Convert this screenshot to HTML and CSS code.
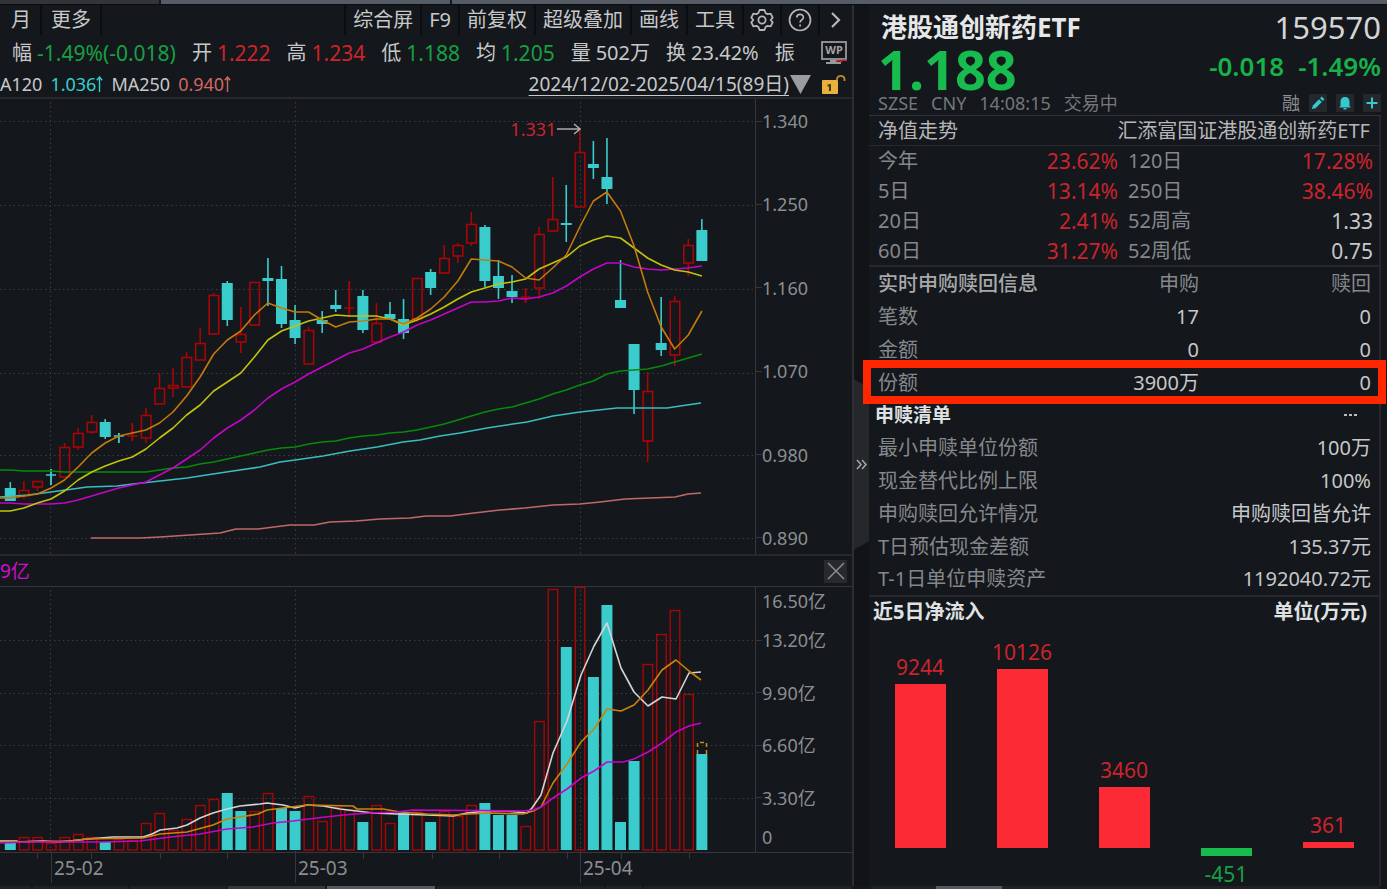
FILE: index.html
```html
<!DOCTYPE html>
<html lang="zh-CN">
<head>
<meta charset="utf-8">
<title>港股通创新药ETF 159570</title>
<link rel="stylesheet" href="styles.css">
</head>
<body>
<div class="strip strip-top"><span class="seg-dim"></span><span class="seg-lit"></span><span class="seg-lit seg-rest"></span></div>

<div class="workspace">
<main class="chart-pane">
  <nav class="toolbar">
    <div class="tool-group">
      <button class="tool">月</button>
      <button class="tool">更多</button>
    </div>
    <div class="tool-group tool-group-right">
      <button class="tool">综合屏</button>
      <button class="tool">F9</button>
      <button class="tool">前复权</button>
      <button class="tool">超级叠加</button>
      <button class="tool">画线</button>
      <button class="tool">工具</button>
      <button class="tool tool-icon" aria-label="设置">
        <svg width="24" height="24" viewBox="0 0 24 24" fill="none" stroke="#b4b6b8" stroke-width="1.8" stroke-linejoin="round"><path d="M9.6 2h4.8l1.2 3 1.9 1.1 3.2-.5 2 4.1-2 2.3 2 2.3-2 4.1-3.2-.5-1.9 1.1-1.2 3H9.600l-1.200-3-1.900-1.100-3.200.500-2-4.100 2-2.300-2-2.300 2-4.100 3.200.500L8.400 5z"/><circle cx="12" cy="12" r="3.600"/></svg>
      </button>
      <button class="tool tool-icon" aria-label="帮助">
        <svg width="24" height="24" viewBox="0 0 24 24" fill="none" stroke="#b4b6b8" stroke-width="1.700"><circle cx="12" cy="12" r="10.500"/><path d="M8.800 9.600c0-4.300 6.600-4.200 6.600-.300 0 2.600-3.300 2.500-3.300 5.200"/><path d="M12.100 16.400v2"/></svg>
      </button>
      <button class="tool tool-icon" aria-label="展开">
        <svg width="12" height="18" viewBox="0 0 12 18" fill="none" stroke="#b4b6b8" stroke-width="2.200"><path d="M2 2l7 7-7 7"/></svg>
      </button>
    </div>
  </nav>

  <div class="quote-row">
    <dl class="quotes">
      <div class="quote"><dt>幅</dt><dd class="down">-1.49%(-0.018)</dd></div>
      <div class="quote"><dt>开</dt><dd class="up">1.222</dd></div>
      <div class="quote"><dt>高</dt><dd class="up">1.234</dd></div>
      <div class="quote"><dt>低</dt><dd class="down">1.188</dd></div>
      <div class="quote"><dt>均</dt><dd class="down">1.205</dd></div>
      <div class="quote"><dt>量</dt><dd class="mixed">502万</dd></div>
      <div class="quote"><dt>换</dt><dd class="mixed">23.42%</dd></div>
      <div class="quote"><dt>振</dt></div>
    </dl>
    <button class="plain" aria-label="WP">
      <svg width="28" height="24" viewBox="0 0 28 24"><rect x="2" y="1" width="24" height="17" fill="none" stroke="#98999c" stroke-width="1.800"/><path d="M10 19h7v2h4v2H6v-2h4z" fill="#98999c"/><text class="wp-text" x="14" y="13" text-anchor="middle">WP</text><path d="M16 20.500l3-1 2 1 2-1.500 4 .500" stroke="#c8262d" stroke-width="1.500" fill="none"/></svg>
    </button>
  </div>

  <div class="ma-row">
    <span>A120</span>
    <span class="ma-cyan">1.036<svg width="7" height="16" viewBox="0 0 7 16" fill="none" stroke="currentColor" stroke-width="1.400"><path d="M3.500 16V1M.8 4.300L3.500 1l2.700 3.300"/></svg></span>
    <span>MA250</span>
    <span class="ma-salmon">0.940<svg width="7" height="16" viewBox="0 0 7 16" fill="none" stroke="currentColor" stroke-width="1.400"><path d="M3.500 16V1M.8 4.300L3.500 1l2.700 3.300"/></svg></span>
    <button class="range">2024/12/02-2025/04/15(89日)</button>
    <svg width="21" height="19" viewBox="0 0 21 19"><path d="M0 0h21L10.500 19z" fill="#9b9c9e"/></svg>
    <button class="plain lock" aria-label="锁定">
      <svg width="26" height="22" viewBox="0 0 26 22"><rect x="1" y="7" width="16" height="14" rx="1" fill="#e8b03c"/><path d="M16 7V5.500a4 4 0 0 1 7.500 0V8" fill="none" stroke="#c48a1e" stroke-width="1.800"/><path d="M9 11v7M6.500 12.500H9" stroke="#4b3a12" stroke-width="2" fill="none"/></svg>
    </button>
  </div>

  <section class="plot-row price-row">
    <div class="plot">
      <svg id="price" class="plot-svg" viewBox="0 99 755 455" preserveAspectRatio="none"></svg>
      <div class="peak">1.331<svg width="25" height="12" viewBox="0 0 25 12" fill="none" stroke="#a9abad" stroke-width="1.500"><path d="M1 6h23M18 1l6 5-6 5"/></svg></div>
    </div>
    <div class="axis price-axis">
      <span class="tick">1.340</span><span class="tick">1.250</span><span class="tick">1.160</span><span class="tick">1.070</span><span class="tick">0.980</span><span class="tick">0.890</span>
    </div>
  </section>

  <div class="sub-head">
    <span>9亿</span>
    <button class="close" aria-label="关闭"><svg width="18" height="18" viewBox="0 0 18 18" stroke="#8b8d90" stroke-width="1.500"><path d="M1 1l16 16M17 1L1 17"/></svg></button>
  </div>

  <section class="plot-row volume-row">
    <div class="plot"><svg id="volume" class="plot-svg" viewBox="0 587 755 265" preserveAspectRatio="none"></svg></div>
    <div class="axis volume-axis">
      <span>16.50亿</span>
      <div class="axis-mid"><span class="tick">13.20亿</span><span class="tick">9.90亿</span><span class="tick">6.60亿</span><span class="tick">3.30亿</span></div>
      <span>0</span>
    </div>
  </section>

  <div class="dates">
    <svg id="date-ticks" class="date-ticks" viewBox="0 0 852 7" preserveAspectRatio="none"></svg>
    <span></span><span class="date">25-02</span><span class="date">25-03</span><span class="date">25-04</span>
  </div>
</main>

<div class="gutter"><button class="collapse" aria-label="收起"><svg width="11" height="11" viewBox="0 0 11 11" fill="none" stroke="#a6a8aa" stroke-width="1.500"><path d="M1 1l4 4.500L1 10M6 1l4 4.500L6 10"/></svg></button></div>

<aside class="info">
  <header class="head">
    <div class="line"><h1 class="name">港股通创新药ETF</h1><span class="code">159570</span></div>
    <div class="line"><strong class="last">1.188</strong><div class="change"><span>-0.018</span><span>-1.49%</span></div></div>
    <div class="line meta">
      <div class="meta-left"><span>SZSE</span><span>CNY</span><span>14:08:15</span><span>交易中</span></div>
      <div class="meta-right"><span>融</span>
        <button class="chip" aria-label="编辑"><svg width="14" height="14" viewBox="0 0 14 14" fill="#35c8cd"><path d="M1 13l.8-3.600L8 3.200 10.800 6l-6.200 6.200zM9 2.200L10.800.6l2.600 2.600L11.800 5z"/></svg></button>
        <button class="chip" aria-label="提醒"><svg width="14" height="14" viewBox="0 0 14 14" fill="#35c8cd"><path d="M7 1c3 0 4.500 2 4.500 4.500V10L13 11.500H1L2.500 10V5.500C2.500 3 4 1 7 1zM5.500 12h3v1.500h-3z"/></svg></button>
        <button class="chip" aria-label="添加"><svg width="14" height="14" viewBox="0 0 14 14" stroke="#35c8cd" stroke-width="2"><path d="M7 1.500v11M1.500 7h11"/></svg></button>
      </div>
    </div>
  </header>

  <div class="body">
    <div class="trend-head"><span>净值走势</span><span>汇添富国证港股通创新药ETF</span></div>
    <table class="trend">
      <tr><th scope="row">今年</th><td class="up">23.62%</td><th scope="row">120日</th><td class="up">17.28%</td></tr>
      <tr><th scope="row">5日</th><td class="up">13.14%</td><th scope="row">250日</th><td class="up">38.46%</td></tr>
      <tr><th scope="row">20日</th><td class="up">2.41%</td><th scope="row">52周高</th><td>1.33</td></tr>
      <tr><th scope="row">60日</th><td class="up">31.27%</td><th scope="row">52周低</th><td>0.75</td></tr>
    </table>
    <table class="flows">
      <tr><th scope="col" class="flows-title">实时申购赎回信息</th><th scope="col">申购</th><th scope="col">赎回</th></tr>
      <tr><th scope="row">笔数</th><td>17</td><td>0</td></tr>
      <tr><th scope="row">金额</th><td>0</td><td>0</td></tr>
      <tr class="marked"><th scope="row">份额</th><td>3900万</td><td>0</td></tr>
    </table>
    <div class="list-head"><h2>申赎清单</h2><button class="plain more" aria-label="更多"><svg width="13" height="3" viewBox="0 0 13 3" fill="#b9bbbd"><path d="M0 0h3v2H0zM5 0h3v2H5zM10 0h3v2h-3z"/></svg></button></div>
    <table class="list">
      <tr><th scope="row">最小申赎单位份额</th><td>100万</td></tr>
      <tr><th scope="row">现金替代比例上限</th><td>100%</td></tr>
      <tr><th scope="row">申购赎回允许情况</th><td>申购赎回皆允许</td></tr>
      <tr><th scope="row">T日预估现金差额</th><td>135.37元</td></tr>
      <tr><th scope="row">T-1日单位申赎资产</th><td>1192040.72元</td></tr>
    </table>
    <div class="net-head"><h2>近5日净流入</h2><h2>单位(万元)</h2></div>
    <div class="net" id="net"></div>
  </div>
</aside>
</div>

<div class="strip strip-bottom">
  <div class="bottom-left"><span></span><span></span><span></span><span class="mid"></span><span class="lit"></span><span></span><span></span><span></span></div>
  <div class="bottom-right"><span></span><span class="lit"></span><span></span></div>
</div>
<script src="script.js"></script>
</body>
</html>
```
FILE: styles.css
```css
* { box-sizing: border-box; }

body {
  margin: 0;
  height: 100vh;
  min-height: 720px;
  display: grid;
  grid-template-rows: 5px minmax(0, 1fr) 3px;
  background: #14171b;
  color: #c6c8ca;
  font: 20px/24px "Noto Sans", "Noto Sans CJK SC", sans-serif;
  overflow: hidden;
}

button {
  font: inherit;
  color: inherit;
  background: none;
  border: 0;
  padding: 0;
}

svg { display: block; }
h1, h2, dl, dd { margin: 0; }
table { width: 100%; border-collapse: collapse; table-layout: fixed; }
th, td { padding: 0; font-weight: 400; }

.up { color: #cb242c; }
.down { color: #17a043; }

/* window strips */
.strip { display: flex; }
.strip-top { gap: 2px; border-bottom: 1px solid #0b0c0f; }
.seg-dim { flex: 159; background: #323439; }
.seg-lit { flex: 289; background: #555c65; }
.seg-rest { flex: 935; }
.strip-bottom { display: grid; grid-template-columns: minmax(0, 1fr) 516px; }
.bottom-left { display: grid; grid-template-columns: 31fr 95fr 96fr 97fr 107fr 167fr 36fr 208fr; gap: 2px; padding-right: 19px; }
.bottom-right { display: grid; grid-template-columns: 65fr 65fr 376fr; padding-right: 8px; }
.strip-bottom span { background: #212024; }
.strip-bottom .mid { background: #36373b; }
.strip-bottom .lit { background: #535961; }

.workspace {
  display: grid;
  grid-template-columns: minmax(0, 1fr) 15px 518px;
  min-height: 0;
}

/* chart pane */
.chart-pane {
  display: flex;
  flex-direction: column;
  min-width: 0;
  min-height: 0;
  border-right: 2px solid #2c2e33;
}

.toolbar { display: flex; justify-content: space-between; height: 30px; flex: none; }
.tool-group { display: flex; padding-left: 2px; }
.tool-group-right { border-left: 2px solid #0b0c0f; padding-left: 0; }
.tool { padding: 0 9px; border-right: 2px solid #0b0c0f; white-space: nowrap; }
.tool-group-right .tool { padding: 0 7px; }
.tool-group-right .tool-icon { padding: 0 6px; }
.tool-group-right .tool:last-child { padding: 0 10px; border: 0; }

.quote-row {
  display: flex;
  justify-content: space-between;
  align-items: center;
  height: 36px;
  flex: none;
  padding: 0 4px 0 12px;
}
.quotes { display: flex; gap: 16px; }
.quote { display: flex; gap: 5px; white-space: nowrap; }
.quote dd { font-size: 21px; }
.quote .mixed { font-size: 20px; }
.wp-text { font: bold 11px "Noto Sans", sans-serif; fill: #a3a4a7; }

.ma-row {
  display: flex;
  align-items: center;
  gap: 8px;
  height: 28px;
  flex: none;
  padding-right: 5px;
  border-bottom: 2px solid #26282d;
  font-size: 18px;
  white-space: nowrap;
}
.ma-row span { display: flex; align-items: center; }
.ma-cyan { color: #38cccf; }
.ma-salmon { color: #d26664; }
.range { margin-left: auto; margin-right: -7px; font-size: 19px; text-decoration: underline; text-underline-offset: 4px; }
.ma-row > svg { margin-right: 2px; }

.plot-row { display: grid; grid-template-columns: 755fr 97fr; min-height: 0; }
.price-row { flex: 455; }
.volume-row { flex: 265; }
.plot { position: relative; min-width: 0; min-height: 0; }
.plot-svg { position: absolute; inset: 0; width: 100%; height: 100%; }

.peak {
  position: absolute;
  right: 23%;
  top: 4%;
  display: flex;
  align-items: center;
  font-size: 18px;
  color: #cb242c;
}

.axis {
  display: flex;
  flex-direction: column;
  justify-content: space-between;
  padding-left: 6px;
  border-left: 1px solid #34363b;
  font-size: 18px;
  color: #8a8e92;
}
.price-axis { padding-top: 10px; padding-bottom: 4px; }
.volume-axis { padding-top: 2px; padding-bottom: 3px; }
.axis-mid { flex: 1; display: flex; flex-direction: column; justify-content: space-between; margin: 15px 0; }
.tick { display: flex; align-items: center; margin-left: -6px; }
.tick::before { content: ""; width: 6px; height: 1px; background: #34363b; }

.sub-head {
  display: flex;
  justify-content: space-between;
  align-items: center;
  height: 33px;
  flex: none;
  padding-right: 5px;
  border-top: 2px solid #26282d;
  border-bottom: 1px solid #34363b;
  font-size: 19px;
  color: #cc10cc;
}
.close { display: grid; place-items: center; width: 23px; height: 23px; background: #27292e; }

.dates {
  position: relative;
  display: grid;
  grid-template-columns: 51fr 244fr 285fr 272fr;
  height: 34px;
  flex: none;
  border-top: 1px solid #34363b;
  font-size: 19px;
  color: #8a8e92;
}
.date { height: 30px; padding: 3px 0 0 2px; border-left: 1px solid #34363b; }
.date-ticks { position: absolute; left: 0; top: 0; width: 100%; height: 7px; }

.gutter { display: flex; align-items: center; background: #111317; }
.collapse {
  display: grid;
  place-items: center;
  width: 15px;
  height: 170px;
  margin-top: 38px;
  background: #25272b;
  clip-path: polygon(0 0, 100% 8px, 100% 162px, 0 100%);
}

/* quote panel */
.info { display: flex; flex-direction: column; min-height: 0; padding-right: 6px; }
.head { flex: none; height: 111px; padding: 4px 0 0 9px; border-bottom: 1px solid #303237; }
.line { display: flex; justify-content: space-between; align-items: center; }
.name { font-size: 26px; line-height: 36px; padding-left: 3px; color: #e6e7e8; }
.code { font-size: 31px; line-height: 36px; color: #d2d4d6; }
.last { font-size: 54px; line-height: 48px; color: #18bb4d; }
.change { display: flex; gap: 14px; padding-bottom: 6px; font-size: 26px; font-weight: 600; color: #18b04a; }
.meta { font-size: 18px; line-height: 20px; color: #74777b; }
.meta-left { display: flex; gap: 13px; }
.meta-right { display: flex; align-items: center; gap: 9px; color: #8b8e91; }
.chip { display: grid; place-items: center; width: 18px; height: 18px; background: #24272c; }

.body { flex: 1; display: flex; flex-direction: column; min-height: 0; border-right: 2px solid #26282d; }
.trend-head {
  display: flex;
  justify-content: space-between;
  align-items: center;
  flex: none;
  height: 30px;
  padding: 0 9px;
  border-bottom: 1px solid #26282d;
  color: #b4b6b8;
}
th { color: #85888b; text-align: left; }
td { text-align: right; }

.trend { border-bottom: 2px solid #26282d; }
.trend tr { height: 30px; }
.trend th:first-child { padding-left: 9px; width: 100px; }
.trend th:nth-child(3) { padding-left: 10px; width: 110px; }
.trend td { font-size: 21px; }
.trend td:nth-child(2) { width: 149px; }
.trend td:last-child { padding-right: 6px; }

.flows tr { height: 33px; }
.flows th:first-child { padding-left: 9px; width: 200px; }
.flows th:nth-child(2) { width: 130px; }
.flows th:not(:first-child) { text-align: right; }
.flows th:last-child, .flows td:last-child { padding-right: 8px; }
.flows .flows-title { font-weight: 500; color: #a6a8aa; }
.marked { position: relative; }
.marked th::after {
  content: "";
  position: absolute;
  inset: -6px -7px -5px -6px;
  border: 8px solid #ff2600;
}

.list-head, .net-head { display: flex; justify-content: space-between; align-items: center; flex: none; }
h2 { font-size: 19px; font-weight: 700; color: #dfe1e3; }
.list-head { height: 32px; padding: 0 22px 0 6px; }
.list { border-bottom: 2px solid #26282d; }
.list tr { height: 33px; }
.list th { padding-left: 9px; }
.list td { padding-right: 8px; }
.net-head { height: 29px; padding: 0 12px 0 4px; }
.net-head h2 { font-size: 20px; }

.net { flex: 1; display: grid; grid-template-columns: repeat(5, 1fr); min-height: 0; padding-top: 15px; }
.net-col { display: grid; grid-template-rows: minmax(0, 1fr) 38px; justify-items: center; font-size: 21px; min-height: 0; }
.net-pos { display: flex; flex-direction: column; justify-content: flex-end; align-items: center; gap: 5px; width: 51px; min-height: 0; }
.net-neg { display: flex; flex-direction: column; align-items: center; gap: 6px; width: 51px; }
.net-bar { width: 100%; flex: none; }
.net-pos .net-bar { background: #fc2a34; }
.net-neg .net-bar { background: #18bb4d; }
```
FILE: script.js
```js
const NS = 'http://www.w3.org/2000/svg';
const X0 = 10.3;
const STEP = 13.56;
const RED = '#a80507';
const CYAN = '#3acccd';

function add(svg, name, attrs) {
  const el = document.createElementNS(NS, name);
  for (const key in attrs) el.setAttribute(key, attrs[key]);
  svg.appendChild(el);
}

// kind, body top, body bottom, high, low
const candles = [
  ['c',488,501,482,501],['r',490,496,481,499],['r',481,487,481,491],['c',475,475,469,485],
  ['r',447,477,443,477],['r',433,447,428,450],['r',422,432,415,434],['c',422,437,419,439],
  ['c',436,436,433,443],['r',436,436,423,441],['r',415,438,408,443],['r',388,404,373,404],
  ['r',385,388,368,397],['r',357,387,352,388],['r',343,360,328,360],['r',295,334,293,334],
  ['c',283,320,281,326],['r',334,342,307,353],['r',282,325,282,325],['c',278,281,258,306],
  ['c',279,324,266,328],['c',320,338,305,344],['r',330,364,327,364],['c',320,324,311,333],
  ['c',305,309,290,312],['r',308,308,281,317],['c',296,330,290,333],['r',323,342,303,342],
  ['c',314,319,302,319],['c',319,333,299,339],['r',278,319,278,322],['c',272,288,269,295],
  ['r',258,273,245,274],['r',245,256,243,263],['r',224,243,212,246],['c',227,281,225,287],
  ['c',276,288,260,299],['c',291,297,275,303],['r',297,297,288,303],['r',234,288,227,299],
  ['r',219,231,177,231],['c',223,225,185,242],['r',152,207,130,207],['c',164,168,141,179],
  ['c',177,189,138,204],['c',300,308,260,308],['c',344,390,344,414],['r',391,441,372,462],
  ['c',343,350,297,356],['r',301,355,296,366],['r',245,263,239,276],['c',230,261,219,261]
];

const volumes = [
  ['c',843],['r',837],['r',837],['r',843],['r',837],['r',834],['r',837],['c',842],['r',839],['r',840],
  ['r',823],['r',813],['r',830],['r',819],['r',805],['r',799],['c',793],['c',811],['r',811],['r',793],
  ['c',808],['c',811],['r',796],['r',821],['r',807],['r',810],['c',822],['r',805],['r',823],['c',813],
  ['r',812],['c',822],['r',811],['r',816],['r',805],['c',803],['c',815],['c',815],['r',826],['r',721],
  ['r',589],['c',647],['r',587],['c',677],['c',605],['c',822],['c',761],['r',664],['r',634],['r',610],
  ['r',694],['c',754]
];

const ma5 = [498,496,494,488,480,467,453,443,436,433,430,423,412,396,377,354,340,331,315,303,308,312,312,320,327,322,321,319,319,324,318,309,297,281,259,260,261,267,278,280,268,255,227,201,192,211,246,292,327,349,335,311];
const ma10 = [511,508,503,499,491,480,472,466,461,457,449,438,428,415,405,391,382,373,357,340,331,326,321,318,315,316,316,316,319,325,320,314,307,299,292,288,284,282,279,269,263,257,246,240,236,238,248,258,265,270,272,276];
const ma20 = [503,504,504,504,503,500,496,492,488,485,482,475,468,459,450,438,428,420,410,398,389,382,374,367,360,353,349,343,337,332,325,320,314,308,302,302,301,298,299,297,293,286,277,269,263,263,267,269,270,269,268,266];
const ma60 = [470,471,471,471,472,472,472,472,472,472,472,470,468,467,464,462,459,456,453,450,448,447,444,442,441,438,436,435,433,432,430,427,424,420,416,412,409,407,403,399,394,390,385,381,374,371,370,369,366,362,358,354];
const ma120 = '0,497 28,495 51,492 73,489 87,487 117,486 133,484 160,481 187,478 213,474 233,471 260,467 280,462 295,460 323,456 350,451 377,447 403,442 420,440 440,436 460,433 487,428 513,424 527,422 553,416 580,412 617,408 667,408 687,405 701,403';
const ma250 = '91,538 140,538 160,537 190,535 220,533 236,529 258,529 274,527 290,525 314,525 330,522 356,521 380,519 410,518 426,516 450,516 474,513 500,510 525,508 553,505 580,504 600,502 625,499 650,498 675,497 688,494 701,493';

const series = (ys) => `-3,${ys[0]} ` + ys.map((y, i) => `${(X0 + i * STEP).toFixed(1)},${y}`).join(' ');

function line(svg, points, color) {
  add(svg, 'polyline', { points, fill: 'none', stroke: color, 'stroke-width': 1.6, 'stroke-linejoin': 'round' });
}

function grid(svg, top, bottom, rows) {
  for (const y of rows) add(svg, 'path', { d: `M0 ${y}.5H755`, stroke: '#3a3c40', 'stroke-dasharray': '1.5 3' });
  for (const x of [50.5, 295.5, 580.5]) add(svg, 'path', { d: `M${x} ${top}V${bottom}`, stroke: '#3a3c40', 'stroke-dasharray': '1.5 3' });
}

const price = document.getElementById('price');
grid(price, 102, 554, [121, 205, 289, 373, 455, 538]);
candles.forEach(([kind, top, bottom, high, low], i) => {
  const x = X0 + i * STEP;
  const color = kind === 'r' ? RED : CYAN;
  add(price, 'path', { d: `M${x} ${high}V${top}M${x} ${bottom}V${low}`, stroke: color, 'stroke-width': 1.6 });
  if (bottom - top < 1) {
    add(price, 'path', { d: `M${x - 5} ${top}h10M${x} ${high}V${low}`, stroke: color, 'stroke-width': 1.6 });
  } else if (kind === 'r') {
    add(price, 'rect', { x: x - 4.5, y: top + 0.5, width: 9.5, height: bottom - top - 0.5, fill: 'none', stroke: RED, 'stroke-width': 1.6 });
  } else {
    add(price, 'rect', { x: x - 5.5, y: top, width: 11, height: bottom - top, fill: CYAN });
  }
});
line(price, ma250, '#c06a68');
line(price, ma120, '#3bbcbf');
line(price, series(ma60), '#078a0b');
line(price, series(ma20), '#c405c8');
line(price, series(ma10), '#c3c30d');
line(price, series(ma5), '#c47a0c');

const volume = document.getElementById('volume');
grid(volume, 590, 852, [640, 693, 745, 798]);
volumes.forEach(([kind, top], i) => {
  const x = X0 + i * STEP;
  if (kind === 'r') {
    add(volume, 'rect', { x: x - 4.5, y: top + 0.5, width: 9.5, height: 849.5 - top, fill: 'none', stroke: RED, 'stroke-width': 1.4 });
  } else {
    add(volume, 'rect', { x: x - 5.5, y: top, width: 11, height: 850 - top, fill: CYAN });
  }
});
add(volume, 'path', { d: 'M697.500 754V742.500H706.500V754', fill: 'none', stroke: '#c8900f', 'stroke-width': 1.5, 'stroke-dasharray': '4 3' });
line(volume, '0,841 17,841 18,842 43,841 57,842 70,841 87,839 113,837 143,837 152,834 160,830 177,828 187,825 200,818 213,813 227,809 240,806 260,804 267,803 283,805 295,808 307,805 323,806 340,809 357,811 373,813 397,814 427,815 453,816 467,813 487,811 507,811 527,813 532,808 541,795 553,753 567,721 581,675 594,646 607,623 621,668 634,692 648,706 662,697 676,699 689,673 701,672', '#d2d4d5');
line(volume, '0,842 70,841 87,839 143,838 160,834 187,832 213,825 227,819 240,817 258,814 267,810 283,808 307,805 353,806 357,809 383,809 400,812 427,814 453,815 487,813 523,814 533,811 541,807 553,783 567,764 581,742 594,729 607,709 621,711 634,705 648,690 662,670 676,660 689,671 701,680', '#c98409');
line(volume, '0,843 30,842 100,842 140,841 170,837 200,834 227,829 253,827 273,823 293,821 317,818 343,815 370,813 397,812 413,810 523,811 533,810 541,807 553,798 567,789 581,778 594,771 607,762 623,762 634,759 648,752 662,743 676,732 689,726 701,723', '#c405c8');

const ticks = document.getElementById('date-ticks');
for (const x of [37, 91, 160, 227, 363, 432, 499, 567, 621, 689]) {
  add(ticks, 'path', { d: `M${x}.5 0V6`, stroke: '#34363b' });
}

// net inflow over the last five days, in units of 10k yuan
const net = document.getElementById('net');
const flows = [9244, 10126, 3460, -451, 361];
for (const value of flows) {
  const col = document.createElement('div');
  col.className = 'net-col';
  const size = Math.abs(value) / 10126;
  if (value > 0) {
    col.innerHTML = `<div class="net-pos up"><span>${value}</span><div class="net-bar" style="height:${(size * 86.5).toFixed(1)}%"></div></div>`;
  } else {
    col.innerHTML = `<div></div><div class="net-neg down"><div class="net-bar" style="height:${Math.round(size * 170)}px"></div><span>${value}</span></div>`;
  }
  net.appendChild(col);
}
```
